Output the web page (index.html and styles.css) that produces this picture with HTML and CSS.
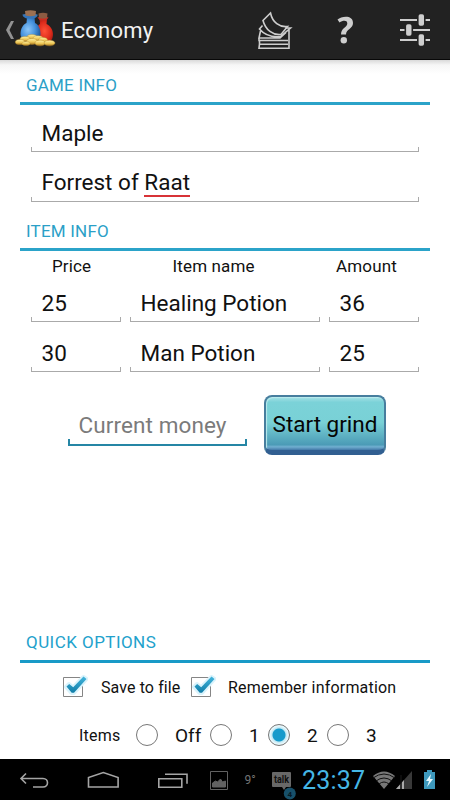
FILE: index.html
```html
<!DOCTYPE html>
<html lang="en">
<head>
<meta charset="utf-8">
<title>Economy</title>
<link rel="stylesheet" href="styles.css">
</head>
<body>
<header class="bar">
  <svg class="brand" width="56" height="60" viewBox="0 0 56 60">
    <defs>
      <radialGradient id="blue" cx=".38" cy=".5" r=".65"><stop offset="0" stop-color="#8cc6f8"/><stop offset=".55" stop-color="#4692dc"/><stop offset="1" stop-color="#1d5599"/></radialGradient>
      <radialGradient id="red" cx=".5" cy=".5" r=".65"><stop offset="0" stop-color="#ff5136"/><stop offset=".6" stop-color="#dc2a1b"/><stop offset="1" stop-color="#8f150e"/></radialGradient>
      <linearGradient id="gold" x2="0" y2="1"><stop offset="0" stop-color="#fff3a4"/><stop offset=".6" stop-color="#ebc455"/><stop offset="1" stop-color="#a3731f"/></linearGradient>
    </defs>
    <path d="M11 21h3l-4.500 9 4.500 9h-3l-5-9z" fill="#929292"/>
    <path d="M39.500 19h7.500l-.5 5c4 2 6.500 6 6.500 10 0 6-3 9-8 9-6 0-9-3-9-9 0-5 1-8 4-10z" fill="url(#red)"/>
    <path d="M37.500 17.500q5-2 11 0l-2.500 3h-6z" fill="#c92d20"/>
    <path d="M38.500 13.500q4.500-1.500 9 0l-.5 4.500q-4 1-8 0z" fill="#8b5b42"/>
    <path d="M27 17h7.500l.5 6c4 2 5.500 6 5.500 11 0 5-4 8-10 8s-10-3-10-8c0-5 2-9 6-11z" fill="url(#blue)"/>
    <path d="M22.500 14.500q8-2 15 0c.5 2-2.500 4-4.500 4h-5c-3 0-5.500-2-5.500-4z" fill="#3574b8"/>
    <path d="M25 11q5.500-1.500 11 0l-.5 4.500q-5 1.500-10 0z" fill="#9c7052"/>
    <g fill="url(#gold)" stroke="#b98a2b" stroke-width=".4">
      <ellipse cx="32" cy="37" rx="5" ry="2.500"/><ellipse cx="25" cy="39" rx="5" ry="2.600"/><ellipse cx="38" cy="38.500" rx="5" ry="2.800"/>
      <ellipse cx="43" cy="40" rx="4.500" ry="2.500"/><ellipse cx="20" cy="42" rx="4.700" ry="2.600"/><ellipse cx="32" cy="41.500" rx="5.500" ry="3"/>
      <ellipse cx="40" cy="43" rx="5" ry="2.800"/><ellipse cx="49.500" cy="43" rx="5.500" ry="2.800"/><ellipse cx="26" cy="43.500" rx="4" ry="2"/>
    </g>
  </svg>
  <h1>Economy</h1>
  <svg class="actions" width="180" height="60" viewBox="0 0 180 60" fill="none" stroke="#cecece" stroke-width="1.600">
    <path d="M20.500 13L13 20.500C15.500 30 23 35.500 31 34.500l6.500-8c-8 1-15-4-17-13.500z"/>
    <path d="M12.500 25.500L9.500 29c5 6 11 8.500 21 7.500l10-8.500h-5M10.500 31l-1.500 7h21l6-5.500M9 38v2.500h29M9 44.200h29M9.500 40.500v3.500l-.5 4.300h30V30"/>
    <g stroke="none" fill="#cecece"><path d="M87.500 19.500c4-3.500 15.500-5 15.500 3.500 0 6-7 6-7 11.500h-5c0-7 6.300-7 6.300-11 0-3.800-4.800-3-7.800-1z"/><circle cx="93.800" cy="40.200" r="3.200"/>
    <path d="M150 19h30v2h-30zM150 29h30v2h-30zM150 39h30v2h-30z"/></g>
    <g fill="#cecece" stroke="#222"><rect x="167.800" y="13.400" width="7" height="13.200" rx="2.500"/><rect x="155.300" y="23.400" width="7" height="13.200" rx="2.500"/><rect x="167.800" y="33.400" width="7" height="13.200" rx="2.500"/></g>
  </svg>
</header>
<main>
  <h2 class="game"><span>GAME INFO</span></h2>
  <div class="stack">
    <div class="field"><span class="maple">Maple</span></div>
    <div class="field"><span class="forest">Forrest of <u>Raat</u></span></div>
  </div>
  <h2 class="item"><span>ITEM INFO</span></h2>
  <div class="grid labels"><span class="price">Price</span><span class="name">Item name</span><span class="amount">Amount</span></div>
  <div class="grid first">
    <div class="field"><span>25</span></div><div class="field"><span class="healing">Healing Potion</span></div><div class="field"><span>36</span></div>
  </div>
  <div class="grid">
    <div class="field"><span>30</span></div><div class="field"><span class="man">Man Potion</span></div><div class="field"><span>25</span></div>
  </div>
  <div class="grind">
    <div class="field money"><span>Current money</span></div>
    <button><span>Start grind</span></button>
  </div>
  <h2 class="quick"><span>QUICK OPTIONS</span></h2>
  <div class="checks">
    <svg width="30" height="30" viewBox="0 0 30 30"><defs><linearGradient id="tick" x2="0" y2="1"><stop stop-color="#43b5dc"/><stop offset="1" stop-color="#107da8"/></linearGradient></defs><path d="M5.500 6.500h19v19h-19z" fill="#fff" stroke="#858585"/><path d="M8 16l3-3 4 3.500L25.500 6l3 2L16 22h-2.500z" fill="none" stroke="#d9f3fc" stroke-width="4" stroke-linejoin="round"/><path id="mark" d="M8.500 15.500l2.700-2.500 4 3.200L25.500 5.500l3 2.500L16 21.700h-2.300z" fill="url(#tick)"/></svg>
    <span class="save">Save to file</span>
    <svg class="second" width="30" height="30" viewBox="0 0 30 30"><path d="M5.500 6.500h19v19h-19z" fill="#fff" stroke="#858585"/><path d="M8 16l3-3 4 3.500L25.500 6l3 2L16 22h-2.500z" fill="none" stroke="#d9f3fc" stroke-width="4" stroke-linejoin="round"/><use href="#mark"/></svg>
    <span class="remember">Remember information</span>
  </div>
  <div class="radios">
    <span class="items">Items</span><i></i><b class="off">Off</b><i></i><b class="one">1</b><i class="on"></i><b class="two">2</b><i></i><b class="three">3</b>
  </div>
</main>
<footer>
  <svg width="450" height="41" viewBox="0 759 450 41" fill="none" stroke="#a5a5a5" stroke-width="1.600">
    <path d="M26 773.500l-5 5 5 5M21 778.500h22c6 0 6 8.500 0 8.500H33"/>
    <path d="M88.500 787v-9.500l14.800-5 14.800 5v9.500z"/>
    <path d="M158.800 778.700h23v8.500h-23zM165 774.200h22v9.500"/>
    <g stroke="#626262" stroke-width="1"><path d="M210.500 771.500h17v18h-17z"/><path d="M212.500 787v-4l3-2 2 1 3-3 2 3 3-1v6z" fill="#626262"/></g>
    <g stroke="none">
      <path d="M273 772h17q1 0 1 1v13q0 1-1 1h-4l-2 3-2-3h-9q-1 0-1-1v-13q0-1 1-1z" fill="#686868"/>
      <circle cx="289.800" cy="793.500" r="6" fill="#17506a"/>
      <text class="temp" x="244.500" y="784" fill="#747474">9°</text>
      <text class="talk" x="274" y="782.500" textLength="15" lengthAdjust="spacingAndGlyphs" fill="#101010">talk</text>
      <text class="badge" x="287.500" y="796.500" fill="#071b26">4</text>
      <text class="clock" x="302" y="789" textLength="63" fill="#45b7e6">23:37</text>
      <path d="M373 776q11-9 22 0l-11 13z" fill="#777"/>
      <path d="M412 771v18h-16z" fill="#393939"/><path d="M404 780v9h-8z" fill="#aaa"/>
      <path d="M427 770h5v2h3v17h-11v-17h3z" fill="#3e99bd"/><path d="M431 774l-5 7h3l-2 6 6-8h-3z" fill="#e7faff"/>
    </g>
    <path d="M373 778q11-8 22 0M376 781q8-6 16 0M379 784q5-4 10 0" stroke="#111" stroke-width="1"/>
    <path d="M401 775v14" stroke="#111"/>
  </svg>
</footer>
</body>
</html>
```

FILE: styles.css
```css
* { box-sizing: border-box; }
body { margin: 0; width: 450px; height: 800px; display: flex; flex-direction: column; background: #fff; color: #111; font-family: Roboto, "Liberation Sans", sans-serif; overflow: hidden; }
.bar { height: 60px; display: flex; align-items: center; background: #222; border-bottom: 1px solid #080808; flex: none; }
.bar svg { flex: none; margin-top: 1px; }
.bar h1 { margin: 3px -5px 0 5px; width: 194px; font-size: 22px; font-weight: 400; line-height: 28px; color: #f2f2f2; letter-spacing: .25px; flex: none; }
main { height: 699px; padding: 0 20px; background: linear-gradient(#d9d9d9 0, #f6f6f6 5px, #fff 14px); }
h2 { margin: 0; padding-left: 6px; color: #2b9fc7; font-size: 17px; line-height: 20px; font-weight: 400; letter-spacing: .2px; border-bottom: 3px solid #2ba3c9; }
.game { height: 45px; padding-top: 15px; }
.stack { padding: 0 11px; }
.field { height: 50px; display: flex; flex-direction: column; justify-content: flex-end; font-size: 22.500px; line-height: 28px; white-space: pre; }
.field span { padding-left: 10.500px; margin-bottom: 1px; }
.field::after { content: ""; height: 4px; border: 1px solid #aaa; border-top: 0; }
.stack .field:first-child { height: 47px; }
.stack .field:first-child span { margin-bottom: 0; }
u { text-decoration: none; box-shadow: 0 2px #d83337; }
.item { height: 49px; padding-top: 19px; }
.grid { display: grid; grid-template-columns: 90px 190px 90px; gap: 9px; padding: 0 11px; height: 49.500px; }
.labels { height: 32px; padding-top: 4px; font-size: 17px; line-height: 22px; white-space: nowrap; letter-spacing: .15px; }
.labels span { padding-left: 21px; }
.labels .name { padding-left: 42.500px; }
.labels .amount { padding-left: 7px; }
.grid.first { height: 39px; }
.grid .field { height: 100%; }
.grid .field span { margin-bottom: 0; padding-left: 10.500px; }
.grind { display: flex; height: 85px; margin-top: 23px; padding-left: 48px; }
.money { width: 179px; height: 51px; color: #7b7b7b; }
.money span { margin-bottom: 0; letter-spacing: .1px; }
.money::after { height: 5px; border: 2px solid #2586a5; border-top: 0; }
button { width: 122px; height: 60px; margin-left: 17px; padding: 1px 0 0; border: 2px solid #477e9e; border-bottom: 5px solid #315f91; border-radius: 8px; background: linear-gradient(#a5e1e5 0, #7bd2d8 10%, #79d1d6 48%, #4b9bb6 90%, #71afd0 94%, #4378a8 100%); box-shadow: inset 1px 1px 1px #bbebed; font: 22.500px/28px Roboto, sans-serif; color: #050505; white-space: nowrap; }
.quick { height: 41px; margin-top: 142px; color: #22a1cc; border-color: #189ac7; padding-top: 10px; letter-spacing: .45px; }
.checks { display: flex; height: 49px; padding-left: 38px; align-items: center; font-size: 16px; white-space: nowrap; letter-spacing: .2px; }
.checks svg { flex: none; margin-top: -2px; }
.checks .save { margin-left: 13px; width: 84px; letter-spacing: .1px; }
.checks .remember { margin-left: 13px; }
.checks .second { margin-left: 1px; margin-right: -1px; }
.radios { height: 47px; display: flex; align-items: center; padding-left: 59px; font-size: 16px; }
.radios span { width: 57px; letter-spacing: .2px; }
.radios i { width: 22px; height: 22px; border: 1px solid #777; border-radius: 50%; flex: none; }
.radios b { font-weight: 400; font-size: 19px; padding-left: 17px; width: 37px; white-space: nowrap; }
.radios .off { width: 52px; }
.radios .one { width: 36px; }
.radios .on { background: radial-gradient(circle, #159acb 0 6px, #bee7f3 7px, #e8f7fb 9px); }
footer { height: 41px; background: #000; }
footer svg { display: block; }
.temp { font-size: 12px; }
.talk { font-size: 10px; font-weight: 700; }
.badge { font-size: 8px; font-weight: 700; }
.clock { font-size: 25px; }
```
